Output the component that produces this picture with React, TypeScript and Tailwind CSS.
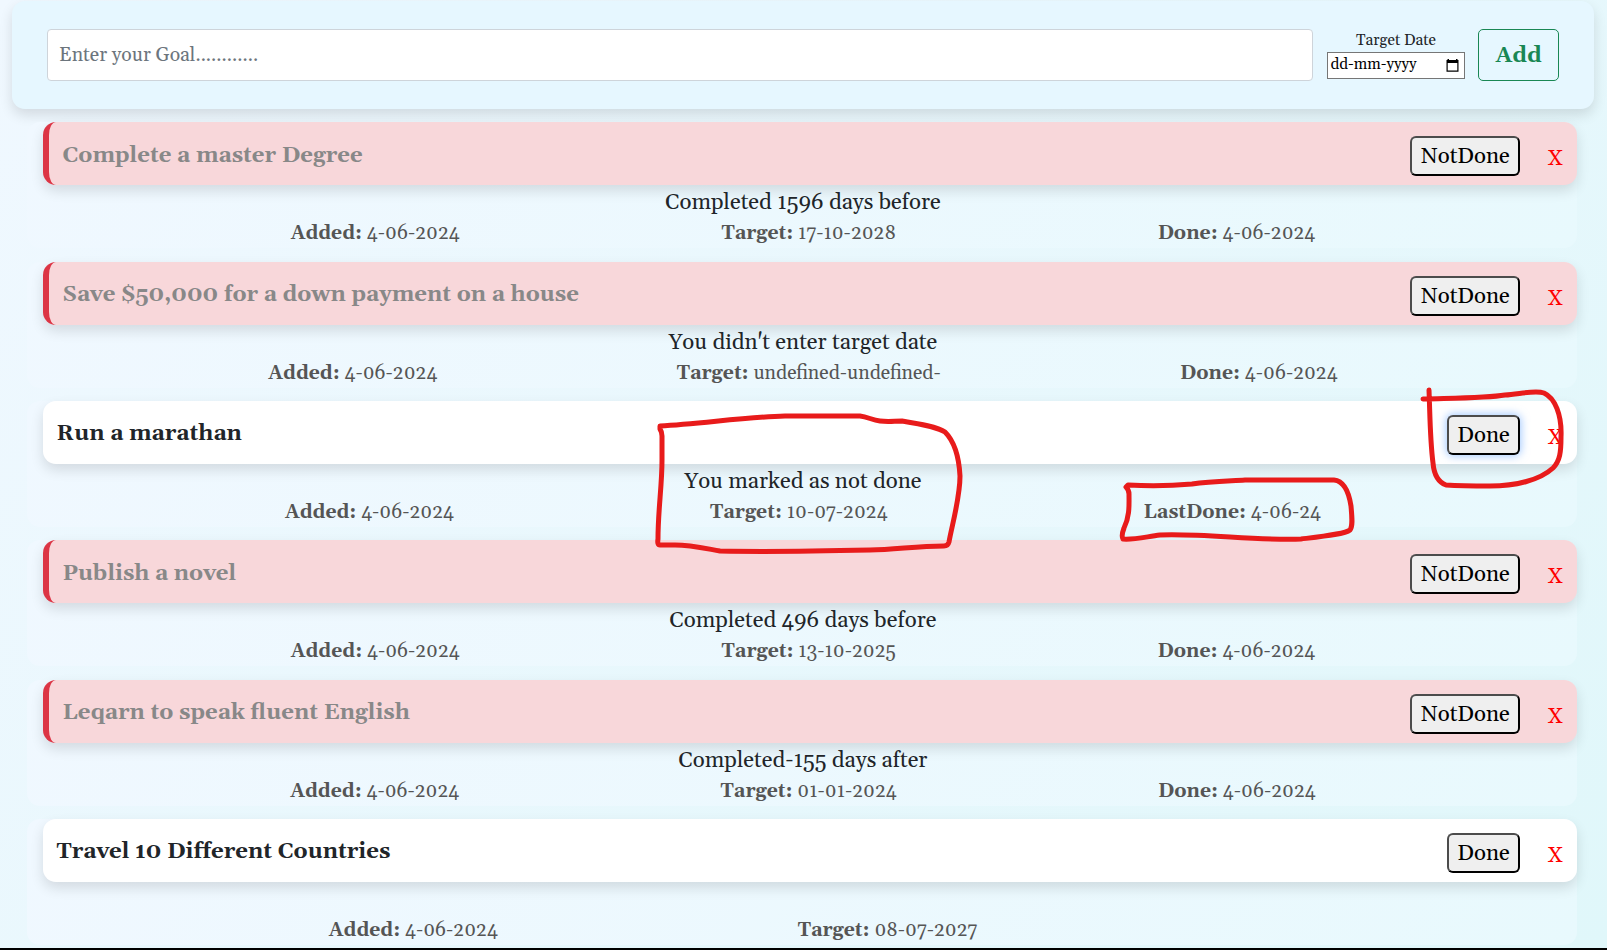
type Goal = {
  title: string;
  done: boolean;
  status: string;
  added: string;
  target: string;
  last?: [string, string];
  focused?: boolean;
};

const goals: Goal[] = [
  { title: 'Complete a master Degree', done: true, status: 'Completed 1596 days before', added: '4-06-2024', target: '17-10-2028', last: ['Done:', '4-06-2024'] },
  { title: 'Save $50,000 for a down payment on a house', done: true, status: "You didn't enter target date", added: '4-06-2024', target: 'undefined-undefined-', last: ['Done:', '4-06-2024'] },
  { title: 'Run a marathan', done: false, status: 'You marked as not done', added: '4-06-2024', target: '10-07-2024', last: ['LastDone:', '4-06-24'], focused: true },
  { title: 'Publish a novel', done: true, status: 'Completed 496 days before', added: '4-06-2024', target: '13-10-2025', last: ['Done:', '4-06-2024'] },
  { title: 'Leqarn to speak fluent English', done: true, status: 'Completed-155 days after', added: '4-06-2024', target: '01-01-2024', last: ['Done:', '4-06-2024'] },
  { title: 'Travel 10 Different Countries', done: false, status: '', added: '4-06-2024', target: '08-07-2027' },
];

function Stamp({ label, value }: { label: string; value: string }) {
  return (
    <div className="whitespace-nowrap">
      <b>{label}</b> {value}
    </div>
  );
}

function GoalCard({ goal }: { goal: Goal }) {
  return (
    <section className="h-[126px] rounded-[13px] bg-[linear-gradient(135deg,#f0f8ff,#e8f9fd)]">
      <div
        className={`ml-4 flex h-[63px] items-center rounded-[13px] pr-[13.5px] pl-[13.5px] shadow-[0_6px_13px_rgba(0,0,0,0.12)] ${
          goal.done ? 'border-l-[6px] border-[#dc3545] bg-[#f8d7da] text-[#888]' : 'bg-white text-[#212529]'
        }`}
      >
        <h2 className="flex-1 pt-[4px] text-[22.2px] leading-[30px] font-bold">{goal.title}</h2>
        <button
          className={`mt-[5px] h-[40px] rounded-[6px] border-2 border-t-[#4c4c4c] border-r-black border-b-black border-l-[#4c4c4c] bg-[#efefef] px-[8.5px] pt-px text-[22.2px] leading-[35px] text-black ${
            goal.focused ? 'shadow-[0_0_8px_1px_rgba(100,165,255,0.6)]' : ''
          }`}
        >
          {goal.done ? 'NotDone' : 'Done'}
        </button>
        <button className="mt-[11px] ml-[27.5px] text-[22.2px] leading-[30px] text-[#f00]">X</button>
      </div>
      <p className="h-[36px] pt-px pl-[2px] text-center text-[22.2px] leading-[33px] text-[#212529]">{goal.status}</p>
      <div className="flex justify-evenly pl-[2px] text-[19.4px] leading-[26px] text-[#555]">
        <Stamp label="Added:" value={goal.added} />
        <Stamp label="Target:" value={goal.target} />
        {goal.last ? <Stamp label={goal.last[0]} value={goal.last[1]} /> : <div />}
      </div>
    </section>
  );
}

export default function App() {
  return (
    <div className="flex h-[950px] flex-col overflow-hidden border-b-2 border-black bg-[linear-gradient(135deg,#f0f8ff,#e0f7fa)] font-['Gelasio','Liberation_Serif',serif]">
      <header className="mt-px mr-[13px] ml-[12px] flex h-[108px] shrink-0 items-center rounded-[13px] bg-[#e6f7ff] pr-[35px] pl-[35px] shadow-[0_6px_13px_rgba(0,0,0,0.12)]">
        <input
          className="h-[52px] w-[1266px] rounded-[4px] border border-[#ced4da] bg-white px-[11px] text-[19.4px] text-[#212529] placeholder:text-[#6c757d]"
          placeholder="Enter your Goal............"
        />
        <div className="ml-[14px] w-[138px] pb-[2px]">
          <div className="h-[23px] text-center text-[15.4px] leading-[23px] text-[#212529]">Target Date</div>
          <div className="flex h-[27px] items-center justify-between border border-[#767676] bg-white pr-[5px] pb-px pl-[2.5px] text-[15.3px] leading-[20px] text-black">
            <span>dd-mm-yyyy</span>
            <svg className="mt-px" width="13" height="13" viewBox="0 0 13 13">
              <path d="M1.500 0h1.500v1h7V0h1.500v1H12.500V12.700H.5V1h1z" />
              <path d="M1.700 4h9.600v7.500H1.700z" fill="#fff" />
            </svg>
          </div>
        </div>
        <button className="ml-[13px] h-[52px] w-[81px] rounded-[5px] border border-[#198754] pt-[2px] text-[22.2px] font-bold text-[#198754]">Add</button>
      </header>
      <main className="mt-[13.4px] mr-[30px] ml-[27px] flex flex-col gap-[13.3px]">
        {goals.map((g) => (
          <GoalCard key={g.title} goal={g} />
        ))}
      </main>
      <svg className="pointer-events-none absolute top-0 left-0" width="1607" height="950" fill="none" stroke="#e81b1b" strokeWidth="5" strokeLinecap="round" strokeLinejoin="round">
        <path d="M660 426C700 424 745 417 785 416H860C868 417 872 420 880 421C889 422 894 421 902 421C920 424 938 427 945 432C954 441 959 457 960 476C960 498 952 525 949 542Q948 546 944 546C915 546 895 550 870 550C825 551 770 552 720 551C703 548 690 545 675 545H660Q657 545 658 539C658 510 662 486 662 460V436Q662 432 660 429Z" />
        <path d="M1423 399C1460 398 1488 398 1505 395C1520 394 1535 390 1544 393C1555 398 1562 415 1561 437C1561 452 1560 461 1553 468C1540 480 1516 486 1490 486C1475 486 1461 486 1446 485C1438 482 1434 475 1433 463C1430 440 1430 415 1429 390" />
        <path d="M1128 485C1145 486 1170 486 1192 484C1210 481 1228 481 1245 480H1334C1344 481 1349 493 1351 506C1352 518 1353 526 1350 530C1345 534 1326 536 1301 539C1260 541 1200 533 1160 535C1145 537 1133 540 1123 539Q1121 536 1124 528C1130 516 1129 504 1129 494Q1129 490 1126 487Z" />
      </svg>
    </div>
  );
}
